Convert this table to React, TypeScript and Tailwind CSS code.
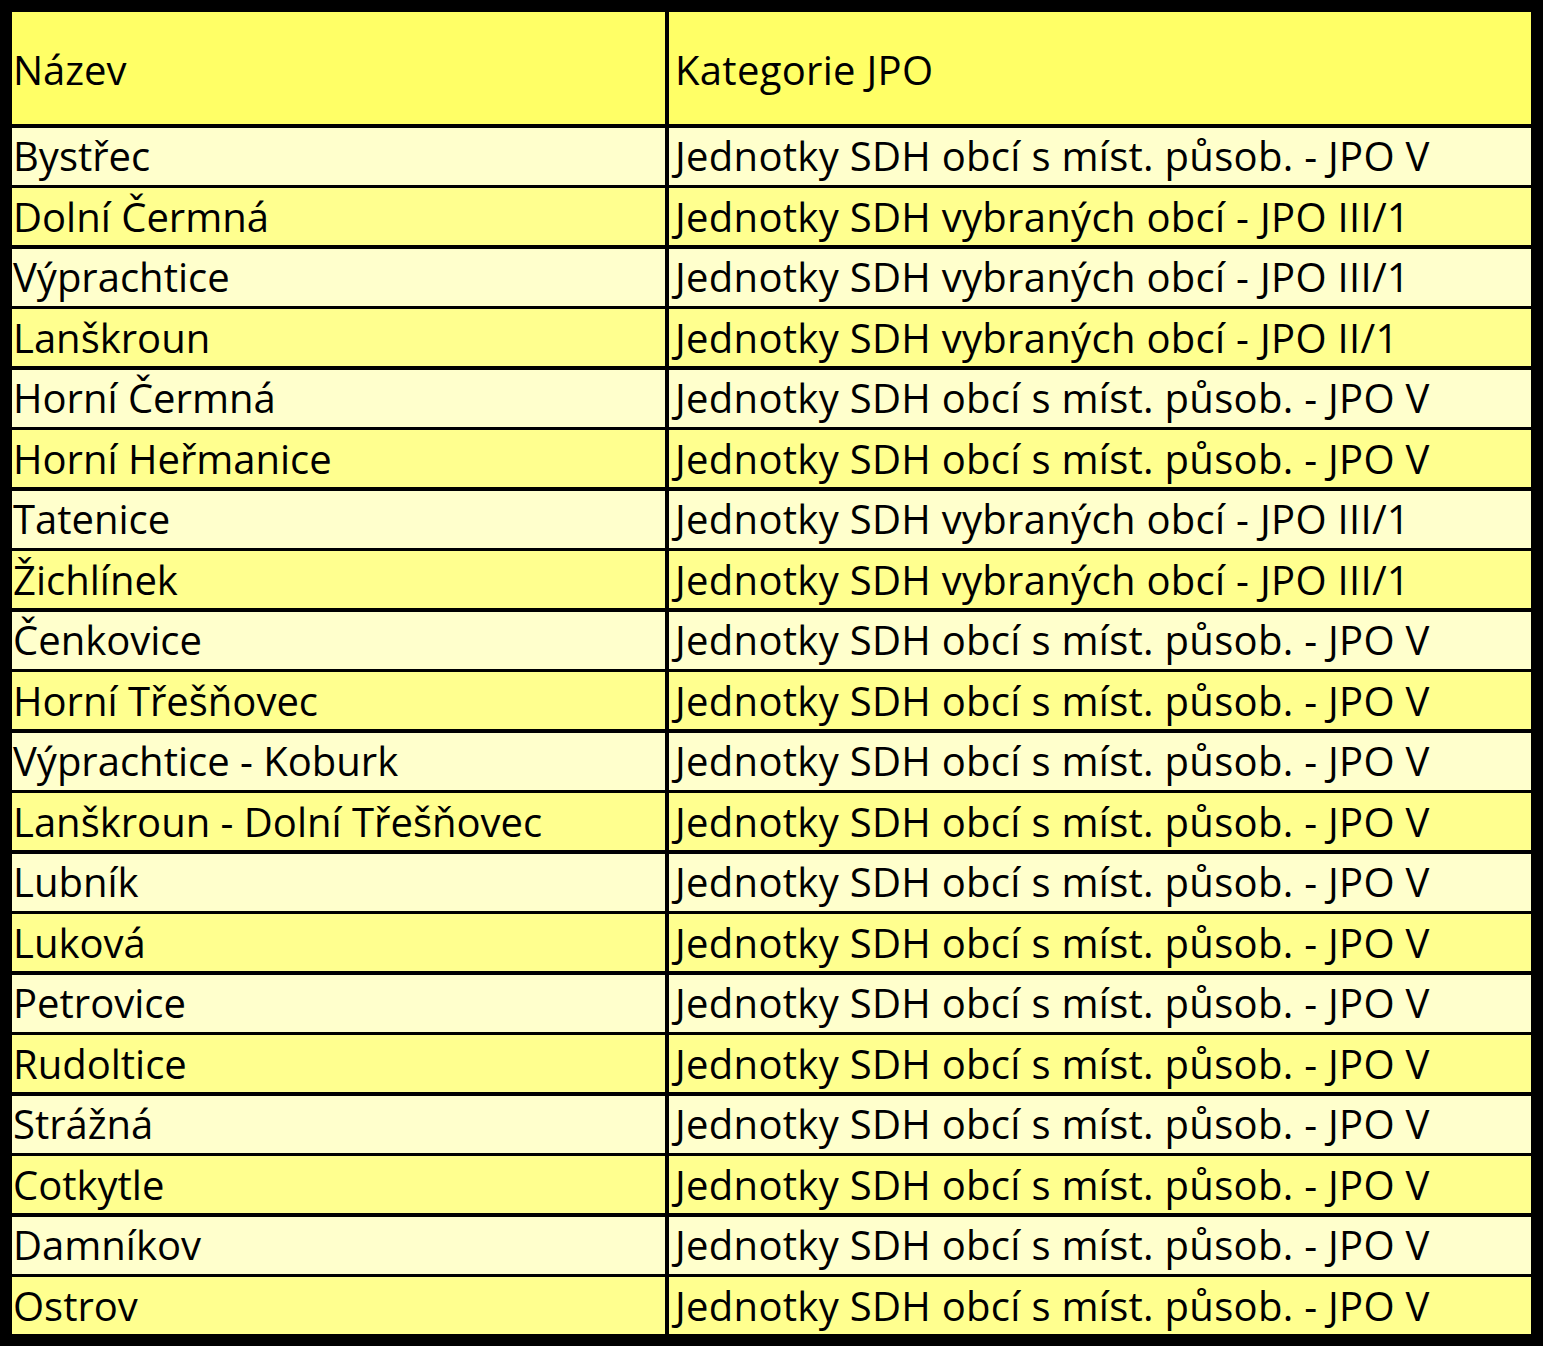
const rows: [string, string][] = [
  ['Bystřec', 'Jednotky SDH obcí s míst. působ. - JPO V'],
  ['Dolní Čermná', 'Jednotky SDH vybraných obcí - JPO III/1'],
  ['Výprachtice', 'Jednotky SDH vybraných obcí - JPO III/1'],
  ['Lanškroun', 'Jednotky SDH vybraných obcí - JPO II/1'],
  ['Horní Čermná', 'Jednotky SDH obcí s míst. působ. - JPO V'],
  ['Horní Heřmanice', 'Jednotky SDH obcí s míst. působ. - JPO V'],
  ['Tatenice', 'Jednotky SDH vybraných obcí - JPO III/1'],
  ['Žichlínek', 'Jednotky SDH vybraných obcí - JPO III/1'],
  ['Čenkovice', 'Jednotky SDH obcí s míst. působ. - JPO V'],
  ['Horní Třešňovec', 'Jednotky SDH obcí s míst. působ. - JPO V'],
  ['Výprachtice - Koburk', 'Jednotky SDH obcí s míst. působ. - JPO V'],
  ['Lanškroun - Dolní Třešňovec', 'Jednotky SDH obcí s míst. působ. - JPO V'],
  ['Lubník', 'Jednotky SDH obcí s míst. působ. - JPO V'],
  ['Luková', 'Jednotky SDH obcí s míst. působ. - JPO V'],
  ['Petrovice', 'Jednotky SDH obcí s míst. působ. - JPO V'],
  ['Rudoltice', 'Jednotky SDH obcí s míst. působ. - JPO V'],
  ['Strážná', 'Jednotky SDH obcí s míst. působ. - JPO V'],
  ['Cotkytle', 'Jednotky SDH obcí s míst. působ. - JPO V'],
  ['Damníkov', 'Jednotky SDH obcí s míst. působ. - JPO V'],
  ['Ostrov', 'Jednotky SDH obcí s míst. působ. - JPO V'],
];

export default function App() {
  return (
    <div
      className="w-[1543px] h-[1346px] bg-black p-[12px] pb-[13px] text-black text-[40px] leading-none"
      style={{ fontFamily: '"Open Sans", sans-serif' }}
    >
      <div className="grid grid-cols-[653px_862px] gap-x-[4px] gap-y-[3.5px] grid-rows-[112px_repeat(20,57px)] [&>*]:flex [&>*]:items-center [&>*]:whitespace-nowrap">
        <div className="bg-[#ffff66] pl-[1px] pt-[3px]">Název</div>
        <div className="bg-[#ffff66] pl-[6px] pt-[3px] tracking-[0.3px]">Kategorie JPO</div>
        {rows.map(([name, cat], i) => {
          const bg = i % 2 === 0 ? 'bg-[#ffffcc]' : 'bg-[#ffff8f]';
          return [
            <div key={name + 'a'} className={`${bg} pl-[1px]`}>{name}</div>,
            <div key={name + 'b'} className={`${bg} pl-[6px] tracking-[0.3px]`}>{cat}</div>,
          ];
        })}
      </div>
    </div>
  );
}
